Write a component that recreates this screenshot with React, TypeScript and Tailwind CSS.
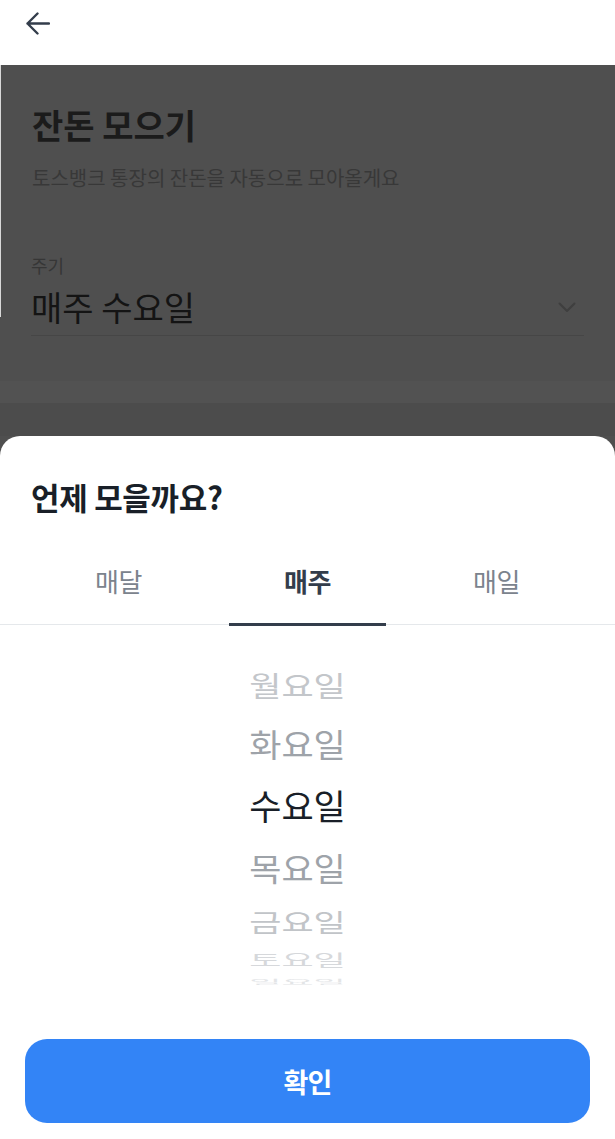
import React from 'react';

const days = [
  { label: '월요일', h: 'h-[56px]', scale: 'scale-y-[0.82]', color: 'text-[#c3c6ca]' },
  { label: '화요일', h: 'h-[60px]', scale: 'scale-y-[0.92]', color: 'text-[#9ea3a9]' },
  { label: '수요일', h: 'h-[64px]', scale: 'scale-y-100', color: 'text-[#191f28]' },
  { label: '목요일', h: 'h-[60px]', scale: 'scale-y-[0.92]', color: 'text-[#9ea3a9]' },
  { label: '금요일', h: 'h-[48px]', scale: 'scale-y-[0.73]', color: 'text-[#c1c4c8]' },
  { label: '토요일', h: 'h-[30px]', scale: 'scale-y-[0.45]', color: 'text-[#d6d8db]' },
  { label: '일요일', h: 'h-[14px]', scale: 'scale-y-[0.16]', color: 'text-[#e3e5e7]' },
];

const tabs = ['매달', '매주', '매일'];

const App = () => {
  return (
    <div className="flex flex-col h-[1139px] w-full bg-[#4f4f4f] font-['Noto_Sans_CJK_KR','Noto_Sans',sans-serif] overflow-hidden">
      {/* Header */}
      <div className="h-[65px] shrink-0 bg-white pl-[25px] pt-[12px]">
        <svg width="25" height="23" viewBox="0 0 25 23" fill="none">
          <path d="M24 11.5H2.5M12.5 1.5L2.5 11.5L12.5 21.5" stroke="#333d4b" strokeWidth="2.4" strokeLinecap="round" strokeLinejoin="round" />
        </svg>
      </div>

      {/* Dimmed page */}
      <div className="flex flex-col flex-1">
        <div className="px-[31px] border-l border-[#d9d9d9] h-[252px]">
          <h1 className="mt-[43px] text-[34px] leading-none font-bold text-[#1b1b1b]">잔돈 모으기</h1>
          <p className="mt-[26px] text-[20px] leading-none text-[#383838]">토스뱅크 통장의 잔돈을 자동으로 모아올게요</p>
        </div>
        <div className="px-[31px]">
          <div className="text-[18px] leading-none text-[#363636] -mt-[61px]">주기</div>
          <div className="flex items-center justify-between mt-[16px] pb-[11px] border-b border-[#464646]">
            <span className="text-[34px] leading-none text-[#141414]">매주 수요일</span>
            <svg width="18" height="11" viewBox="0 0 18 11" fill="none" className="mr-[8px]">
              <path d="M1.5 1.5L9 9L16.5 1.5" stroke="#3f3f3f" strokeWidth="2" strokeLinecap="round" strokeLinejoin="round" />
            </svg>
          </div>
        </div>
        <div className="mt-[45px] h-[22px] bg-[#525252]" />
        <div className="flex-1 bg-[#4c4c4c]" />
      </div>

      {/* Bottom sheet */}
      <div className="h-[703px] shrink-0 bg-white rounded-t-[20px] flex flex-col">
        <h2 className="pl-[31px] mt-[45px] text-[31px] leading-none font-bold tracking-[-0.01em] text-[#191f28]">언제 모을까요?</h2>

        <div className="mt-[56px] grid grid-cols-3 px-[24px] border-b border-[#e5e8eb]">
          {tabs.map((t) => (
            <div key={t} className="relative flex justify-center pb-[30px]">
              <span
                className={`text-[26px] leading-none tracking-[-0.02em] ${
                  t === '매주' ? 'font-bold text-[#333d4b]' : 'text-[#7b838d]'
                }`}
              >
                {t}
              </span>
              {t === '매주' && <div className="absolute left-4 right-4 -bottom-[2px] h-[3px] bg-[#333d4b]" />}
            </div>
          ))}
        </div>

        {/* Wheel picker */}
        <div className="pt-[31px] pr-[20px] flex flex-col items-center">
          {days.map((d) => (
            <div key={d.label} className={`${d.h} flex items-center justify-center overflow-hidden`}>
              <span className={`text-[35px] leading-none ${d.color} ${d.scale}`}>{d.label}</span>
            </div>
          ))}
        </div>

        <div className="mt-auto px-[25px] pb-[16px]">
          <button className="w-full h-[84px] rounded-[22px] bg-[#3384f6] text-white text-[27px] font-bold tracking-[-0.03em] leading-none">
            확인
          </button>
        </div>
      </div>
    </div>
  );
};

export default App;
